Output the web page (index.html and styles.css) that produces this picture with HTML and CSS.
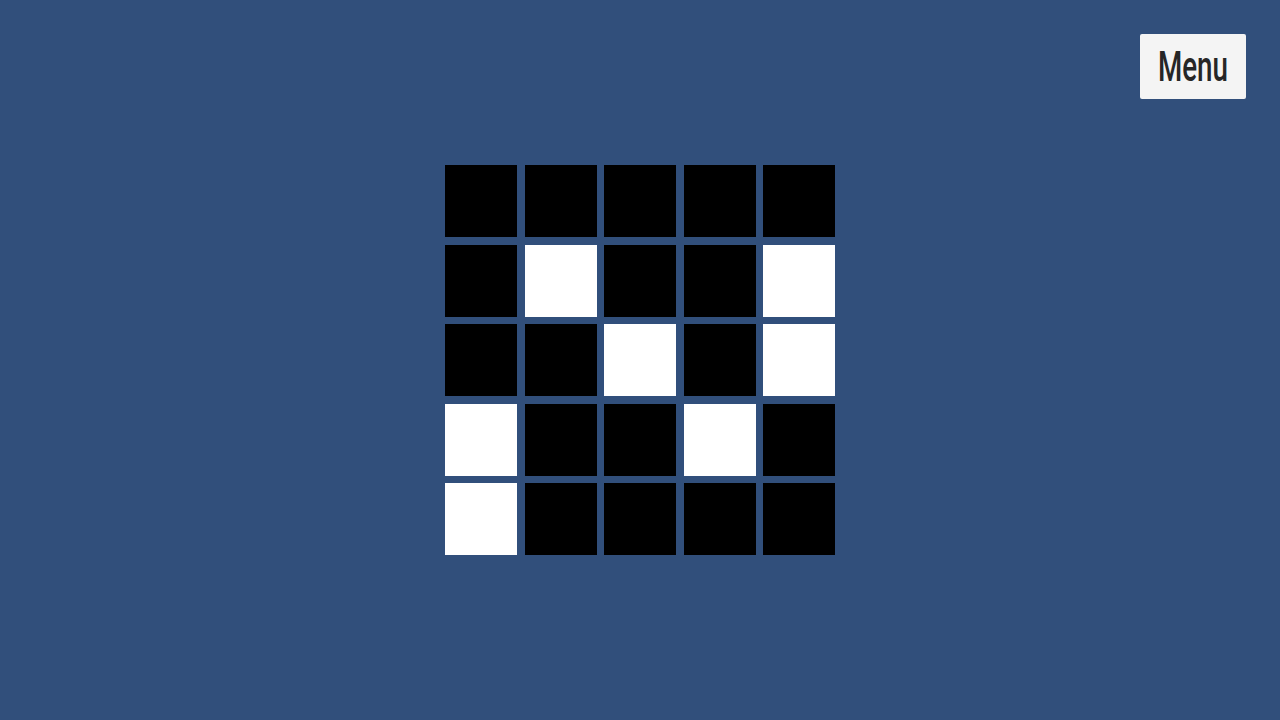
FILE: index.html
```html
<!DOCTYPE html>
<html>
<head>
<meta charset="utf-8">
<link rel="stylesheet" href="styles.css">
</head>
<body>
<div class="stage">
  <button class="menu"><span class="menu-label">Menu</span></button>
  <div class="board">
    <div class="cell"></div><div class="cell"></div><div class="cell"></div><div class="cell"></div><div class="cell"></div>
    <div class="cell"></div><div class="cell on"></div><div class="cell"></div><div class="cell"></div><div class="cell on"></div>
    <div class="cell"></div><div class="cell"></div><div class="cell on"></div><div class="cell"></div><div class="cell on"></div>
    <div class="cell on"></div><div class="cell"></div><div class="cell"></div><div class="cell on"></div><div class="cell"></div>
    <div class="cell on"></div><div class="cell"></div><div class="cell"></div><div class="cell"></div><div class="cell"></div>
  </div>
</div>
</body>
</html>
```

FILE: styles.css
```css
html, body {
  margin: 0;
  padding: 0;
  width: 100%;
  height: 100%;
  background: #314f7b;
  overflow: hidden;
}
.stage {
  position: relative;
  width: 1280px;
  height: 720px;
  display: flex;
  align-items: center;
  justify-content: center;
}
.menu {
  position: absolute;
  top: 34px;
  right: 34px;
  width: 106px;
  height: 65px;
  border: none;
  border-radius: 2px;
  background: #f4f4f4;
  color: #262626;
  font-family: Roboto, "Liberation Sans", sans-serif;
  font-weight: 500;
  font-size: 42px;
  line-height: 1;
  padding: 0;
  display: flex;
  align-items: center;
  justify-content: center;
}
.menu-label {
  display: inline-block;
  transform: scaleX(0.66);
  margin-top: 0px;
}
.board {
  display: grid;
  grid-template-columns: repeat(5, 72px);
  grid-template-rows: repeat(5, 72px);
  gap: 7.5px;
}
.cell {
  background: #000;
}
.cell.on {
  background: #fff;
}
```
